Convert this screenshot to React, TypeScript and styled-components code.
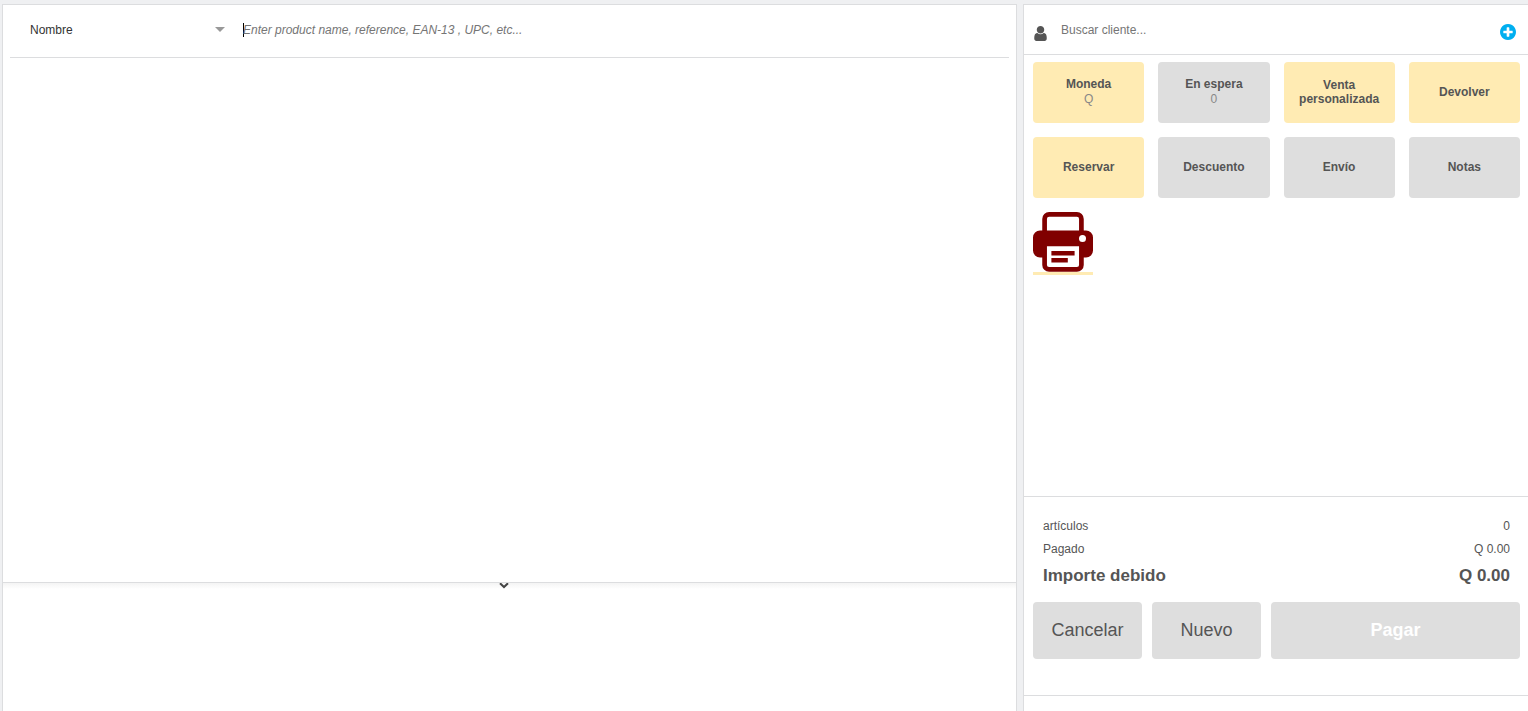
import React from 'react';
import styled, { createGlobalStyle } from 'styled-components';

const line = '#dcdddf';
const ink = '#555555';

const GlobalStyle = createGlobalStyle`
  * {
    box-sizing: border-box;
  }
  body {
    margin: 0;
    background: #eff0f2;
    color: ${ink};
    font: 12px/14px "Liberation Sans", Arial, sans-serif;
  }
  button,
  input,
  select {
    font: inherit;
    color: inherit;
  }
`;

const Page = styled.div`
  display: grid;
  grid-template-columns: minmax(0, 203fr) minmax(0, 101fr);
  gap: 6px;
  min-height: 100vh;
  padding: 4px 0 0 2px;
`;

const Workspace = styled.main`
  display: flex;
  flex-direction: column;
  background: #fff;
  border: 1px solid ${line};
  border-bottom: 0;
`;

const Results = styled.section`
  flex: 1;
  padding: 0 7px;
`;

const SearchBar = styled.form`
  display: flex;
  align-items: center;
  height: 53px;
  padding: 0 8px 2px 20px;
  border-bottom: 1px solid ${line};
`;

const FilterField = styled.div`
  position: relative;
  width: 213px;
`;

const FilterSelect = styled.select`
  display: block;
  width: 100%;
  height: 28px;
  padding: 0;
  border: 0;
  outline: 0;
  appearance: none;
  background: transparent;
  color: #333;
`;

const FilterArrow = styled.span`
  position: absolute;
  top: 11px;
  right: 18px;
  border: 5px solid transparent;
  border-top-color: #999;
  border-bottom: 0;
  pointer-events: none;
`;

const Caret = styled.span`
  width: 1px;
  height: 14px;
  margin-right: -1px;
  background: #000;
`;

const TextInput = styled.input<{ $italic?: boolean }>`
  flex: 1;
  min-width: 0;
  height: 28px;
  padding: 0;
  border: 0;
  outline: 0;
  background: transparent;
  caret-color: transparent;
  font-style: ${({ $italic }) => ($italic ? 'italic' : 'normal')};
  &::placeholder {
    color: #757575;
    opacity: 1;
  }
`;

const Drawer = styled.section`
  display: flex;
  justify-content: center;
  align-items: flex-start;
  height: 129px;
  padding-right: 12px;
  border-top: 1px solid ${line};
  background: linear-gradient(#f4f4f4, #fff 6px);
`;

const PlainButton = styled.button`
  display: flex;
  padding: 0;
  border: 0;
  background: none;
  cursor: pointer;
`;

const Sidebar = styled.aside`
  display: flex;
  flex-direction: column;
  background: #fff;
  border: 1px solid ${line};
  border-width: 1px 0 0 1px;
`;

const CustomerBar = styled.form`
  display: flex;
  align-items: center;
  height: 50px;
  padding: 0 12px 0 10px;
  border-bottom: 1px solid ${line};
`;

const CustomerLabel = styled.label`
  display: flex;
  width: 27px;
  padding-top: 8px;
`;

const AddCustomer = styled(PlainButton)`
  padding-top: 4px;
`;

const Actions = styled.div`
  display: grid;
  grid-template-columns: repeat(4, minmax(0, 1fr));
  gap: 14px;
  padding: 7px 8px 14px 9px;
`;

const ActionButton = styled.button<{ $accent?: boolean }>`
  display: flex;
  flex-direction: column;
  align-items: center;
  justify-content: center;
  height: 61px;
  padding: 0 8px 2px;
  border: 0;
  border-radius: 4px;
  background: ${({ $accent }) => ($accent ? '#ffebb3' : '#dedede')};
  font-weight: bold;
  line-height: 14px;
  cursor: pointer;
`;

const ActionValue = styled.span`
  font-weight: normal;
  color: #888;
  line-height: 16px;
`;

const PrintButton = styled(PlainButton)`
  align-self: flex-start;
  margin-left: 9px;
  border-bottom: 3px solid #ffebb3;
`;

const Summary = styled.footer`
  margin-top: auto;
  margin-bottom: 15px;
  padding: 18px 8px 36px 9px;
  border: 1px solid ${line};
  border-width: 1px 0;
`;

const Totals = styled.dl`
  margin: 0 0 11px;
  padding: 0 10px;
`;

const TotalRow = styled.div<{ $strong?: boolean }>`
  display: flex;
  justify-content: space-between;
  font-size: ${({ $strong }) => ($strong ? 17 : 12)}px;
  font-weight: ${({ $strong }) => ($strong ? 'bold' : 'normal')};
  line-height: ${({ $strong }) => ($strong ? 30 : 23)}px;
  dd {
    margin: 0;
  }
`;

const Checkout = styled.div`
  display: grid;
  grid-template-columns: 7fr 7fr 16fr;
  gap: 10px;
`;

const CheckoutButton = styled.button<{ $primary?: boolean }>`
  height: 57px;
  padding: 0 0 2px;
  border: 0;
  border-radius: 4px;
  background: #dedede;
  color: ${({ $primary }) => ($primary ? '#fff' : ink)};
  font-size: 18px;
  font-weight: ${({ $primary }) => ($primary ? 'bold' : 'normal')};
  line-height: 20px;
  cursor: pointer;
`;

const UserIcon = () => (
  <svg width="13" height="15" viewBox="256 128 1280 1536" fill={ink} aria-hidden="true">
    <path d="M1536 1399q0 109-62.5 187t-150.5 78h-854q-88 0-150.5-78t-62.5-187q0-85 8.5-160.5t31.5-152 58.5-131 94-89 134.5-34.5q131 128 313 128t313-128q76 0 134.5 34.5t94 89 58.5 131 31.5 152 8.5 160.5zm-256-887q0 159-112.5 271.5t-271.5 112.5-271.5-112.5-112.5-271.5 112.5-271.5 271.5-112.5 271.5 112.5 112.5 271.5z" />
  </svg>
);

const PlusIcon = () => (
  <svg width="16" height="16" viewBox="128 128 1536 1536" fill="#00aff0" aria-hidden="true">
    <path d="M1344 960v-128q0-26-19-45t-45-19h-256v-256q0-26-19-45t-45-19h-128q-26 0-45 19t-19 45v256h-256q-26 0-45 19t-19 45v128q0 26 19 45t45 19h256v256q0 26 19 45t45 19h128q26 0 45-19t19-45v-256h256q26 0 45-19t19-45zm320-64q0 209-103 385.5t-279.5 279.5-385.5 103-385.5-103-279.5-279.5-103-385.5 103-385.5 279.5-279.5 385.5-103 385.5 103 279.5 279.5 103 385.5z" />
  </svg>
);

const PrinterIcon = () => (
  <svg width="60" height="60" viewBox="0 0 60 60" aria-hidden="true">
    <rect x="11.6" y="2.4" width="36.8" height="55" rx="4.5" fill="#fff" stroke="#800000" strokeWidth="4.7" />
    <path
      fill="#800000"
      d="M7 18.4H53a7 7 0 0 1 7 7V38.6a7 7 0 0 1-7 7H50V34.2H10V45.6H7a7 7 0 0 1-7-7V25.4a7 7 0 0 1 7-7Z"
    />
    <path fill="#800000" d="M18.4 38.9H41.6V43.4H18.4ZM18.4 45.9H34.8V50.4H18.4Z" />
    <circle cx="49.5" cy="26.4" r="3.5" fill="#fff" />
  </svg>
);

const ChevronIcon = () => (
  <svg width="10" height="6" viewBox="0 0 10 6" aria-hidden="true">
    <path d="M1 .2L5 4 9 .2" fill="none" stroke="#444" strokeWidth="2" />
  </svg>
);

const actions: { label: string; value?: string; accent?: boolean }[] = [
  { label: 'Moneda', value: 'Q', accent: true },
  { label: 'En espera', value: '0' },
  { label: 'Venta personalizada', accent: true },
  { label: 'Devolver', accent: true },
  { label: 'Reservar', accent: true },
  { label: 'Descuento' },
  { label: 'Envío' },
  { label: 'Notas' },
];

const totals = [
  { label: 'artículos', value: '0' },
  { label: 'Pagado', value: 'Q 0.00' },
  { label: 'Importe debido', value: 'Q 0.00', strong: true },
];

export default function App() {
  return (
    <>
      <GlobalStyle />
      <Page>
        <Workspace>
          <Results>
            <SearchBar onSubmit={(e) => e.preventDefault()}>
              <FilterField>
                <FilterSelect aria-label="Buscar por">
                  <option>Nombre</option>
                </FilterSelect>
                <FilterArrow />
              </FilterField>
              <Caret />
              <TextInput
                $italic
                type="text"
                aria-label="Producto"
                placeholder="Enter product name, reference, EAN-13 , UPC, etc..."
              />
            </SearchBar>
          </Results>
          <Drawer>
            <PlainButton type="button" aria-label="Contraer">
              <ChevronIcon />
            </PlainButton>
          </Drawer>
        </Workspace>
        <Sidebar>
          <CustomerBar onSubmit={(e) => e.preventDefault()}>
            <CustomerLabel htmlFor="customer" aria-label="Cliente">
              <UserIcon />
            </CustomerLabel>
            <TextInput id="customer" type="text" placeholder="Buscar cliente..." />
            <AddCustomer type="button" aria-label="Nuevo cliente">
              <PlusIcon />
            </AddCustomer>
          </CustomerBar>
          <Actions>
            {actions.map(({ label, value, accent }) => (
              <ActionButton key={label} type="button" $accent={accent}>
                {label}
                {value && <ActionValue>{value}</ActionValue>}
              </ActionButton>
            ))}
          </Actions>
          <PrintButton type="button" aria-label="Imprimir">
            <PrinterIcon />
          </PrintButton>
          <Summary>
            <Totals>
              {totals.map(({ label, value, strong }) => (
                <TotalRow key={label} $strong={strong}>
                  <dt>{label}</dt>
                  <dd>{value}</dd>
                </TotalRow>
              ))}
            </Totals>
            <Checkout>
              <CheckoutButton type="button">Cancelar</CheckoutButton>
              <CheckoutButton type="button">Nuevo</CheckoutButton>
              <CheckoutButton type="button" $primary>
                Pagar
              </CheckoutButton>
            </Checkout>
          </Summary>
        </Sidebar>
      </Page>
    </>
  );
}
